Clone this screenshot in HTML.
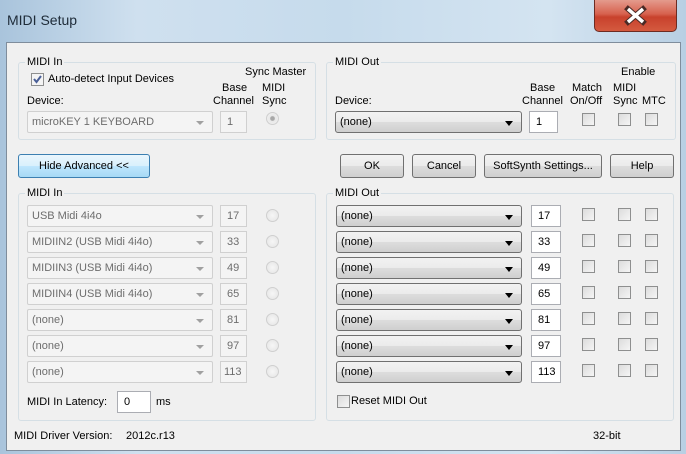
<!DOCTYPE html>
<html><head><meta charset="utf-8"><style>
*{box-sizing:border-box;margin:0;padding:0}
body{width:686px;height:454px;overflow:hidden;position:relative;font-family:"Liberation Sans",Tahoma,sans-serif;font-size:11px;color:#000;background:linear-gradient(90deg,#a9c4dc 0%,#cfe0ef 20%,#c6dbec 50%,#d4e4f1 80%,#b8cfe3 100%)}
.a{position:absolute;white-space:nowrap}
.title{left:7px;top:12px;font-size:14px;color:#1e2b38}
.close{left:594px;top:0;width:83px;height:32px;border:1px solid #6d2b22;border-top:none;border-radius:0 0 5px 5px;background:linear-gradient(#e49b8d,#d7614e 45%,#c8412c 55%,#d45a3f)}
.client{left:6px;top:42px;width:675px;height:409px;background:#f0f0f0;border:1px solid #7f8d9c}
.grp{position:absolute;border:1px solid #d5dfe5;border-radius:3px}
.gl{position:absolute;background:#f0f0f0;padding:0 2px;top:-7px;left:6px}
.btn{position:absolute;height:24px;border:1px solid #707070;border-radius:3px;background:linear-gradient(#f2f2f2,#ebebeb 50%,#dddddd 51%,#cfcfcf);text-align:center;line-height:22px}
.cbd{position:absolute;height:22px;border:1px solid #d0d0d0;border-radius:2px;background:#f4f4f4;color:#6d6d6d;padding-left:4px;line-height:20px}
.cbd:after{content:"";position:absolute;right:8px;top:9px;border:4px solid transparent;border-top:4px solid #a0a0a0;border-bottom:none}
.cb{position:absolute;height:22px;border:1px solid #707070;border-radius:3px;background:linear-gradient(#f2f2f2,#ebebeb 50%,#dddddd 51%,#cfcfcf);padding-left:4px;line-height:20px}
.cb:after{content:"";position:absolute;right:8px;top:9px;border:4px solid transparent;border-top:5px solid #000;border-bottom:none}
.ed{position:absolute;height:22px;border:1px solid #d0d0d0;background:#f4f4f4;color:#6d6d6d;padding-left:6px;line-height:20px}
.ew{position:absolute;height:22px;border:1px solid #abadb3;background:#fff;padding-left:6px;line-height:20px}
.rd{position:absolute;width:13px;height:13px;border-radius:50%;border:1px solid #cfcfcf;background:radial-gradient(#f6f6f6,#e4e4e4)}
.ck{position:absolute;width:13px;height:13px;border:1px solid #8e8f8f;background:linear-gradient(135deg,#dcdcdc,#f5f5f5)}
</style></head><body>
<div class="a title">MIDI Setup</div>
<div class="a close"><svg width="83" height="32" style="position:absolute;left:-1px;top:0"><path d="M34 9 L49 22 M49 9 L34 22" stroke="#4a2a25" stroke-width="5.5" stroke-linecap="square"/><path d="M34 9 L49 22 M49 9 L34 22" stroke="#fff" stroke-width="3.5"/></svg></div>
<div class="a client"></div>

<div class="grp" style="left:18px;top:62px;width:298px;height:78px"><div class="gl">MIDI In</div></div>
<div class="grp" style="left:326px;top:62px;width:350px;height:78px"><div class="gl">MIDI Out</div></div>
<div class="ck" style="left:31px;top:73px;border-color:#8e8f8f;background:#f4f4f4"><svg width="11" height="11" style="position:absolute;left:0;top:0"><path d="M2 5 L4.5 8 L9 2" stroke="#4a5f97" stroke-width="2" fill="none"/></svg></div>
<div class="a" style="left:48px;top:73px">Auto-detect Input Devices</div>
<div class="a" style="left:245px;top:66px">Sync Master</div>
<div class="a" style="left:222px;top:82px">Base</div><div class="a" style="left:262px;top:82px">MIDI</div>
<div class="a" style="left:27px;top:95px">Device:</div>
<div class="a" style="left:213px;top:95px">Channel</div><div class="a" style="left:262px;top:95px">Sync</div>
<div class="cbd" style="left:27px;top:111px;width:186px">microKEY 1 KEYBOARD</div>
<div class="ed" style="left:220px;top:111px;width:27px">1</div>
<div class="rd" style="left:266px;top:112px;background:radial-gradient(#a8a8a8 25%,#e8e8e8 35%,#f2f2f2)"></div>

<div class="a" style="left:621px;top:66px">Enable</div>
<div class="a" style="left:530px;top:82px">Base</div><div class="a" style="left:572px;top:82px">Match</div><div class="a" style="left:613px;top:82px">MIDI</div>
<div class="a" style="left:335px;top:95px">Device:</div>
<div class="a" style="left:522px;top:95px">Channel</div><div class="a" style="left:570px;top:95px">On/Off</div><div class="a" style="left:613px;top:95px">Sync</div><div class="a" style="left:642px;top:95px">MTC</div>
<div class="cb" style="left:335px;top:111px;width:187px">(none)</div>
<div class="ew" style="left:529px;top:111px;width:29px">1</div>
<div class="ck" style="left:582px;top:113px"></div><div class="ck" style="left:618px;top:113px"></div><div class="ck" style="left:645px;top:113px"></div>

<div class="btn" style="left:18px;top:154px;width:132px;border-color:#3c7fb1;background:linear-gradient(#eaf6fd,#d9f0fc 50%,#bee6fd 51%,#a7d9f5)">Hide Advanced &lt;&lt;</div>
<div class="btn" style="left:340px;top:154px;width:64px">OK</div>
<div class="btn" style="left:412px;top:154px;width:64px">Cancel</div>
<div class="btn" style="left:484px;top:154px;width:118px">SoftSynth Settings...</div>
<div class="btn" style="left:610px;top:154px;width:64px">Help</div>

<div class="grp" style="left:18px;top:193px;width:298px;height:228px"><div class="gl">MIDI In</div></div>
<div class="grp" style="left:326px;top:193px;width:348px;height:228px"><div class="gl">MIDI Out</div></div>

<div class="cbd" style="left:27px;top:205px;width:186px">USB Midi 4i4o</div><div class="ed" style="left:220px;top:205px;width:27px">17</div><div class="rd" style="left:266px;top:209px"></div>
<div class="cbd" style="left:27px;top:231px;width:186px">MIDIIN2 (USB Midi 4i4o)</div><div class="ed" style="left:220px;top:231px;width:27px">33</div><div class="rd" style="left:266px;top:235px"></div>
<div class="cbd" style="left:27px;top:257px;width:186px">MIDIIN3 (USB Midi 4i4o)</div><div class="ed" style="left:220px;top:257px;width:27px">49</div><div class="rd" style="left:266px;top:261px"></div>
<div class="cbd" style="left:27px;top:283px;width:186px">MIDIIN4 (USB Midi 4i4o)</div><div class="ed" style="left:220px;top:283px;width:27px">65</div><div class="rd" style="left:266px;top:287px"></div>
<div class="cbd" style="left:27px;top:309px;width:186px">(none)</div><div class="ed" style="left:220px;top:309px;width:27px">81</div><div class="rd" style="left:266px;top:313px"></div>
<div class="cbd" style="left:27px;top:335px;width:186px">(none)</div><div class="ed" style="left:220px;top:335px;width:27px">97</div><div class="rd" style="left:266px;top:339px"></div>
<div class="cbd" style="left:27px;top:361px;width:186px">(none)</div><div class="ed" style="left:220px;top:361px;width:27px;padding-left:3px">113</div><div class="rd" style="left:266px;top:365px"></div>

<div class="cb" style="left:336px;top:205px;width:186px">(none)</div><div class="ew" style="left:531px;top:205px;width:30px">17</div><div class="ck" style="left:582px;top:208px"></div><div class="ck" style="left:618px;top:208px"></div><div class="ck" style="left:645px;top:208px"></div>
<div class="cb" style="left:336px;top:231px;width:186px">(none)</div><div class="ew" style="left:531px;top:231px;width:30px">33</div><div class="ck" style="left:582px;top:234px"></div><div class="ck" style="left:618px;top:234px"></div><div class="ck" style="left:645px;top:234px"></div>
<div class="cb" style="left:336px;top:257px;width:186px">(none)</div><div class="ew" style="left:531px;top:257px;width:30px">49</div><div class="ck" style="left:582px;top:260px"></div><div class="ck" style="left:618px;top:260px"></div><div class="ck" style="left:645px;top:260px"></div>
<div class="cb" style="left:336px;top:283px;width:186px">(none)</div><div class="ew" style="left:531px;top:283px;width:30px">65</div><div class="ck" style="left:582px;top:286px"></div><div class="ck" style="left:618px;top:286px"></div><div class="ck" style="left:645px;top:286px"></div>
<div class="cb" style="left:336px;top:309px;width:186px">(none)</div><div class="ew" style="left:531px;top:309px;width:30px">81</div><div class="ck" style="left:582px;top:312px"></div><div class="ck" style="left:618px;top:312px"></div><div class="ck" style="left:645px;top:312px"></div>
<div class="cb" style="left:336px;top:335px;width:186px">(none)</div><div class="ew" style="left:531px;top:335px;width:30px">97</div><div class="ck" style="left:582px;top:338px"></div><div class="ck" style="left:618px;top:338px"></div><div class="ck" style="left:645px;top:338px"></div>
<div class="cb" style="left:336px;top:361px;width:186px">(none)</div><div class="ew" style="left:531px;top:361px;width:30px">113</div><div class="ck" style="left:582px;top:364px"></div><div class="ck" style="left:618px;top:364px"></div><div class="ck" style="left:645px;top:364px"></div>

<div class="a" style="left:27px;top:396px">MIDI In Latency:</div>
<div class="ew" style="left:117px;top:391px;width:34px">0</div>
<div class="a" style="left:156px;top:396px">ms</div>
<div class="ck" style="left:337px;top:395px"></div>
<div class="a" style="left:351px;top:395px">Reset MIDI Out</div>

<div class="a" style="left:14px;top:430px">MIDI Driver Version:</div>
<div class="a" style="left:126px;top:430px">2012c.r13</div>
<div class="a" style="left:593px;top:430px">32-bit</div>
</body></html>
